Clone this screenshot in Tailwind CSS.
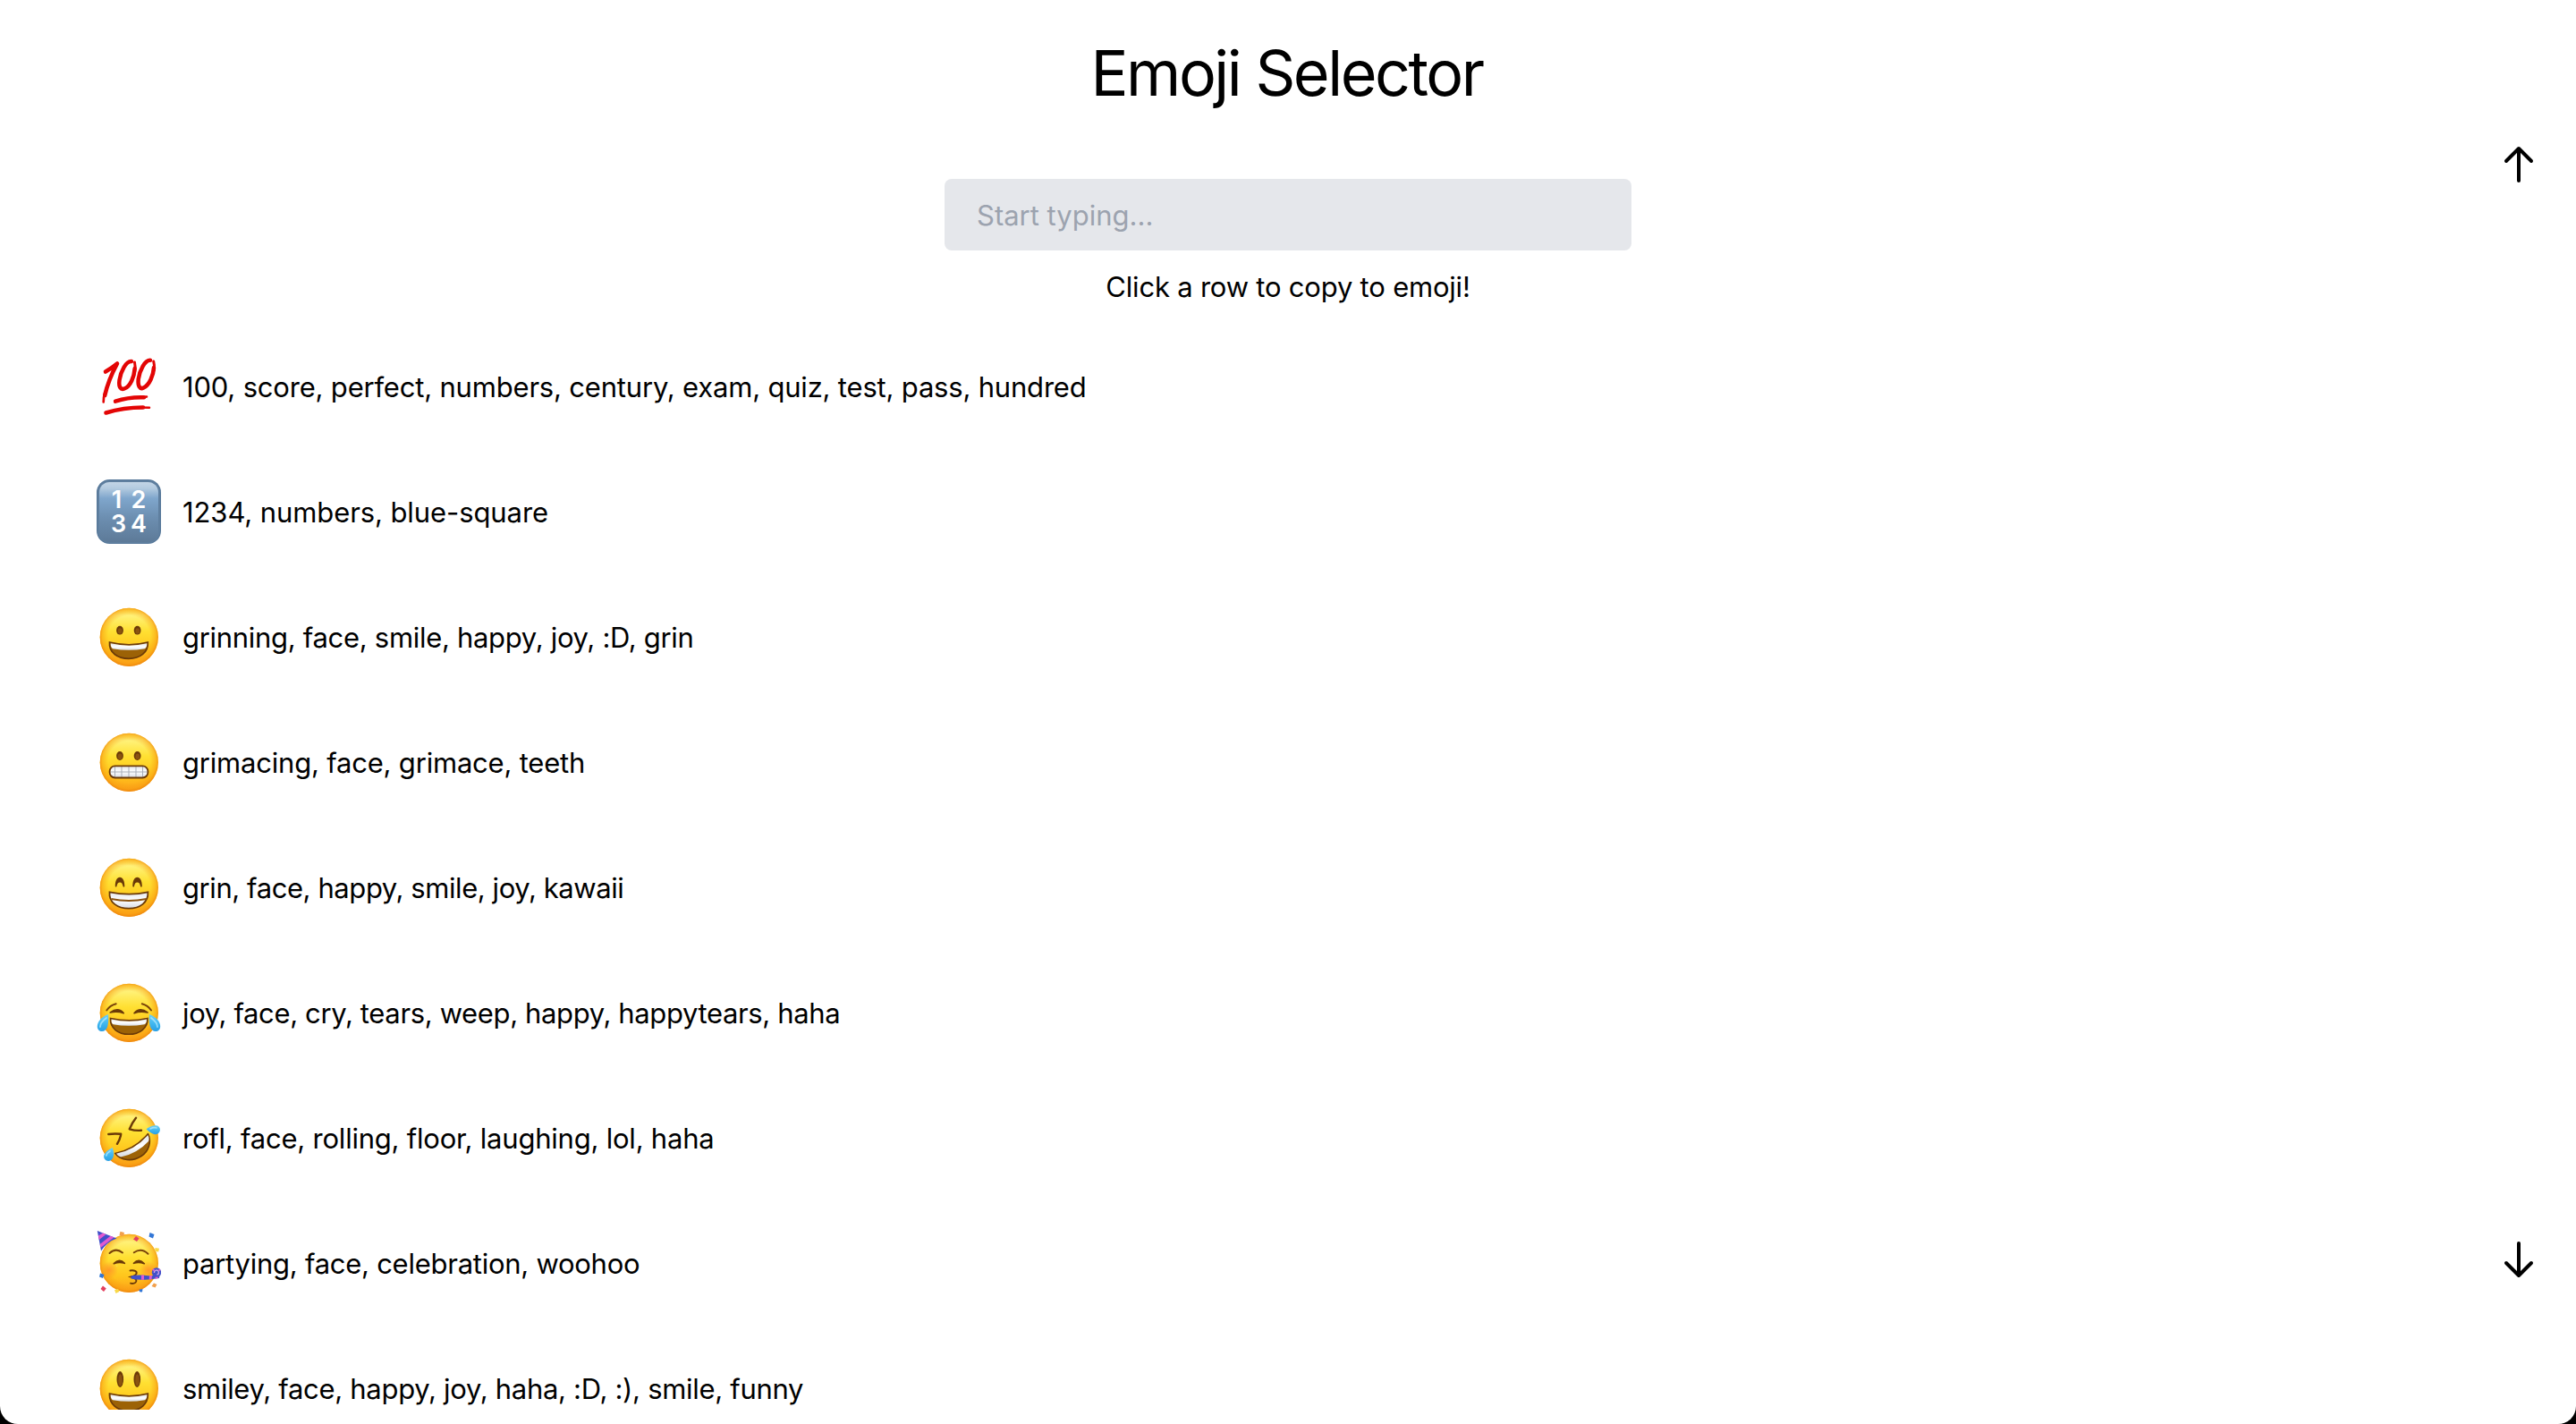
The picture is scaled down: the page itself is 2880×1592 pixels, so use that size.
<!DOCTYPE html>
<html lang="en">
<head>
<meta charset="utf-8">
<title>Emoji Selector</title>
<script src="https://cdn.jsdelivr.net/npm/@tailwindcss/browser@4"></script>
</head>
<body class="bg-black">
<!-- Shared gradients and shapes for the emoji artwork -->
<svg class="absolute size-0" aria-hidden="true">
  <defs>
    <linearGradient id="skin" x1="0" y1="0" x2="0" y2="1">
      <stop offset="0" stop-color="#ffe23f"/><stop offset=".12" stop-color="#fff27a"/><stop offset=".4" stop-color="#ffe032"/><stop offset=".72" stop-color="#ffc51c"/><stop offset="1" stop-color="#fda01a"/>
    </linearGradient>
    <radialGradient id="rim" cx=".5" cy=".49" r=".51">
      <stop offset=".7" stop-color="#f79a10" stop-opacity="0"/><stop offset=".9" stop-color="#f79a10" stop-opacity=".5"/><stop offset="1" stop-color="#ee860c" stop-opacity=".95"/>
    </radialGradient>
    <linearGradient id="teeth" x1="0" y1="0" x2="0" y2="1"><stop offset="0" stop-color="#e3e6ec"/><stop offset=".5" stop-color="#fff"/><stop offset="1" stop-color="#d5dae2"/></linearGradient>
    <linearGradient id="tear" x1="0" y1="0" x2="0" y2="1"><stop offset="0" stop-color="#6fd0f7"/><stop offset=".6" stop-color="#3cb4ef"/><stop offset="1" stop-color="#2a9fe4"/></linearGradient>
    <linearGradient id="tile" x1="0" y1="0" x2="0" y2="1"><stop offset="0" stop-color="#c3d5e6"/><stop offset=".1" stop-color="#b4cbe0"/><stop offset=".27" stop-color="#7fa6cc"/><stop offset=".6" stop-color="#6c8eb0"/><stop offset="1" stop-color="#5d7a98"/></linearGradient>
    <radialGradient id="blush"><stop offset="0" stop-color="#ff7a2a" stop-opacity=".6"/><stop offset="1" stop-color="#ff7a2a" stop-opacity="0"/></radialGradient>
    <g id="face"><circle cx="36.3" cy="36.3" r="32.6" fill="url(#skin)"/><circle cx="36.3" cy="36.3" r="32.6" fill="url(#rim)"/></g>
    <g id="eye"><ellipse rx="3.9" ry="4.9" fill="#6b3a08"/><ellipse cx=".2" cy=".8" rx="2.4" ry="3.2" fill="#8a5310"/></g>
  </defs>
</svg>

<div class="relative flex h-[1592px] w-[2880px] flex-col overflow-hidden rounded-b-[20px] bg-white font-['Inter',sans-serif] text-[31px] text-black">
  <header class="flex flex-col items-center pt-[42px]">
    <h1 class="h-20 pr-[3px] text-[70px] leading-[80px] tracking-[-2.5px]">Emoji Selector</h1>
    <input type="text" placeholder="Start typing..." class="mt-[78px] h-20 w-3xl rounded-lg bg-gray-200 px-9 pt-px tracking-normal placeholder:text-[#9ca3af]">
    <p class="mt-[17px] h-12 leading-[48px] tracking-[-0.21px]">Click a row to copy to emoji!</p>
  </header>

  <ul class="mt-[17px] h-[1214px] overflow-hidden px-[108px]">
    <li class="flex h-[140px] items-center gap-6">
      <svg class="size-[72px] shrink-0" viewBox="0 0 72 72" fill="none" stroke="#e30505" stroke-linecap="round" stroke-linejoin="round">
        <path stroke-width="4.6" d="M10 19.5Q17 15.500 23 10.500Q13 29 9.200 46"/><path stroke-width="2.600" d="M9.500 42Q7.600 48 7.700 53.500"/>
        <path stroke-width="4.500" d="M39 8C33 7.500 27 19 25.500 29C24.500 37 27 40 31 38.500C38 36 42 25 42.700 16"/><path stroke-width="3" d="M42.800 19Q43.500 13 42.500 9"/>
        <path stroke-width="4.500" d="M60 6.800C54 6.500 48 18 46.700 28C46 36 48.500 39.500 52.500 37.500C59.500 34 63.500 23 64 15"/><path stroke-width="3" d="M64.200 18Q65 12 63.700 8"/>
        <path stroke-width="4.400" d="M21 52.700Q36 47.700 53 48.300"/><path stroke-width="2.600" d="M50 48.500L56 47.500"/>
        <path stroke-width="4.600" d="M10.500 65.500Q30 59.500 52 59.500"/><path stroke-width="2.500" d="M48 59.500L59 59.800"/>
      </svg>
      <span class="pt-px leading-[48px] tracking-[-0.19px]">100, score, perfect, numbers, century, exam, quiz, test, pass, hundred</span>
    </li>
    <li class="flex h-[140px] items-center gap-6">
      <svg class="size-[72px] shrink-0" viewBox="0 0 72 72">
        <rect width="72" height="72" rx="14.500" fill="#557799"/>
        <rect x="1" y="1" width="70" height="70" rx="13.500" fill="#5f7f9f"/>
        <rect x="3" y="3" width="66" height="67" rx="11.500" fill="url(#tile)"/>
        <g fill="#fff" font-family="Inter, sans-serif" font-size="27" font-weight="600" text-anchor="middle"><text x="22.500" y="32">1</text><text x="47" y="32">2</text><text x="24.500" y="59">3</text><text x="47" y="59">4</text></g>
      </svg>
      <span class="pt-px leading-[48px] tracking-[-0.09px]">1234, numbers, blue-square</span>
    </li>
    <li class="flex h-[140px] items-center gap-6">
      <svg class="size-[72px] shrink-0" viewBox="0 0 72 72">
        <use href="#face"/><use href="#eye" x="26" y="28.700"/><use href="#eye" x="45.600" y="28.700"/>
        <path d="M14.500 42Q36.500 47.500 57.300 42C58 53.500 48.500 60.300 36 60.300S13.500 53.500 14.500 42Z" fill="#9c6206" stroke="#6b3a08" stroke-width="1.700"/>
        <path d="M15.700 43.300Q36.500 48 56.300 43.300Q56.500 47.500 54 49.200Q36 52.500 18 49.200Q15.500 47.500 15.700 43.300Z" fill="url(#teeth)"/>
      </svg>
      <span class="pt-px leading-[48px] tracking-[-0.3px]">grinning, face, smile, happy, joy, :D, grin</span>
    </li>
    <li class="flex h-[140px] items-center gap-6">
      <svg class="size-[72px] shrink-0" viewBox="0 0 72 72">
        <use href="#face"/><use href="#eye" x="26" y="29"/><use href="#eye" x="45.600" y="29"/>
        <rect x="14.600" y="40.300" width="42.800" height="13.200" rx="6" fill="url(#teeth)"/>
        <path d="M15 47H57M20.500 40.500V53.500M28 40.500V53.500M36 40.500V53.500M44 40.500V53.500M51.500 40.500V53.500" stroke="#a7adb8" stroke-width="1" fill="none"/>
        <rect x="14.600" y="40.300" width="42.800" height="13.200" rx="6" fill="none" stroke="#6b3a08" stroke-width="1.800"/>
      </svg>
      <span class="pt-px leading-[48px] tracking-[-0.2px]">grimacing, face, grimace, teeth</span>
    </li>
    <li class="flex h-[140px] items-center gap-6">
      <svg class="size-[72px] shrink-0" viewBox="0 0 72 72">
        <use href="#face"/>
        <path d="M20.800 34.500C20.800 28.500 22.800 24.700 26 24.700S31.300 28.500 31.300 34.500C31.300 36 29.800 36 29.500 34.800C29 32 28 30.500 26 30.500S23 32 22.500 34.800C22.200 36 20.800 36 20.800 34.500ZM40.300 34.500C40.300 28.500 42.300 24.700 45.500 24.700S50.800 28.500 50.800 34.500C50.800 36 49.300 36 49 34.800C48.500 32 47.500 30.500 45.500 30.500S42.500 32 42 34.800C41.700 36 40.300 36 40.300 34.500Z" fill="#6b3a08"/>
        <path d="M14.500 41.300Q36.500 46 57.400 41.300C58 53 48.500 59.600 36 59.600S13.500 53 14.500 41.300Z" fill="url(#teeth)" stroke="#6b3a08" stroke-width="1.800"/>
        <path d="M16.300 49Q36 53 55.700 49" fill="none" stroke="#8a5310" stroke-width="1.800"/>
      </svg>
      <span class="pt-px leading-[48px] tracking-[-0.42px]">grin, face, happy, smile, joy, kawaii</span>
    </li>
    <li class="flex h-[140px] items-center gap-6">
      <svg class="size-[72px] shrink-0" viewBox="0 0 72 72">
        <use href="#face"/>
        <path d="M11.300 33.500Q15 28 21.700 26.300M61 33.500Q57.300 28 50.800 26.300" fill="none" stroke="#7a4409" stroke-width="2" stroke-linecap="round"/>
        <path d="M15.300 36Q24 29.500 30.300 36.700Q23 34.300 15.300 36ZM57 36Q48.300 29.500 42 36.700Q49 34.300 57 36Z" fill="#6b3a08" stroke="#6b3a08" stroke-width="1.600" stroke-linejoin="round"/>
        <path d="M15.500 42.500Q36.500 47 57 42.500C57.500 53.500 48 60.300 36 60.300S15 53.500 15.500 42.500Z" fill="#9c6206" stroke="#6b3a08" stroke-width="1.600"/>
        <path d="M16.500 43.500Q36.500 48 56 43.500Q56 48 53.500 49.300Q36 52.300 18.500 49.300Q16.300 48 16.500 43.500Z" fill="url(#teeth)"/>
        <path d="M13 38C5 41 .8 46.500 .8 51.500C.8 55 3 57 6 57C12 57 14 49 13 38Z" fill="url(#tear)"/><path d="M59 38C67 41 71.200 46.500 71.200 51.500C71.200 55 69 57 66 57C60 57 58 49 59 38Z" fill="url(#tear)"/>
        <path d="M11 42C7 45 4 48 4 52M61 42C65 45 68 48 68 52" fill="none" stroke="#b9ecff" stroke-width="1.800" stroke-linecap="round" opacity=".7"/>
      </svg>
      <span class="pt-px leading-[48px] tracking-[-0.36px]">joy, face, cry, tears, weep, happy, happytears, haha</span>
    </li>
    <li class="flex h-[140px] items-center gap-6">
      <svg class="size-[72px] shrink-0" viewBox="0 0 72 72">
        <use href="#face"/>
        <path d="M13.300 32Q20 31 27.200 31.800Q26.500 37.500 23 42.800M44 13.800Q39.500 19.500 36.800 26.300Q43 28.300 50 27.800" fill="none" stroke="#6b3a08" stroke-width="2.400" stroke-linecap="round" stroke-linejoin="round"/>
        <path d="M20.800 53.500Q43 49 57.500 31.500C61.500 40 59 50.500 50 56.500C40 63 27 61.500 20.800 53.500Z" fill="#9c6206" stroke="#6b3a08" stroke-width="1.600" stroke-linejoin="round"/>
        <path d="M22 53.800Q43.500 49.500 57.300 33Q59.300 36.500 58 40Q45 54 27 57.500Q23.500 56.500 22 53.800Z" fill="url(#teeth)"/>
        <path d="M55.500 26.300C60 23 63.500 21.800 67 22.300C70 23 71.500 25.500 70.800 28.200C69.800 31.500 66.500 32.800 63.500 31.800C60.500 30.800 58 28.500 55.500 26.300Z" fill="url(#tear)"/>
        <path d="M17.800 47C19.500 52 19.700 56 18 59C16.200 62 13 62.800 10.500 61.200C8 59.500 7.300 56.500 9.200 53.700C11 51 14 49 17.800 47Z" fill="url(#tear)"/>
        <path d="M60 26Q64 24 67 25M15 51Q11.500 53 10.800 56" fill="none" stroke="#b9ecff" stroke-width="1.600" stroke-linecap="round" opacity=".7"/>
      </svg>
      <span class="pt-px leading-[48px] tracking-[-0.22px]">rofl, face, rolling, floor, laughing, lol, haha</span>
    </li>
    <li class="flex h-[140px] items-center gap-6">
      <svg class="size-[72px] shrink-0" viewBox="0 0 72 72">
        <use href="#face"/>
        <circle cx="14" cy="44" r="10" fill="url(#blush)"/><circle cx="58" cy="44" r="10" fill="url(#blush)"/>
        <path d="M.8 0L22.500 8.500Q12 12 5 22.500Z" fill="#4150c9"/>
        <path d="M1.800 5.500L7 2.500L10.500 4L2.800 10ZM3.700 15L15.500 5.800L19.500 7.300L4.500 19Z" fill="#e259cf"/>
        <path d="M14.500 25Q21.500 18.500 29 24.500M41.800 24.300Q50 18.500 57.500 25.700" fill="none" stroke="#7a4409" stroke-width="2" stroke-linecap="round"/>
        <path d="M19.300 36.700Q25.500 30 31.300 36.300Q25.500 34.500 19.300 36.700ZM41.500 36.300Q47.300 30 53.300 36.700Q47.300 34.500 41.500 36.300Z" fill="#6b3a08" stroke="#6b3a08" stroke-width="1.700" stroke-linejoin="round"/>
        <path d="M37.500 44.500C42 43.500 45.500 45.500 44.500 48C43.500 50 40.500 51 38.500 51.500C42 52.500 45 54 44.300 56.500C43.500 58.700 40.500 59.300 38 58.700" fill="none" stroke="#6b3a08" stroke-width="1.900" stroke-linecap="round"/>
        <path d="M38.500 50.500Q46 48.500 60 50.500L70.500 49L70 53L58 54.500Q46 55.500 38.500 53.500Z" fill="#4150c9"/>
        <path d="M50 49.600H53V54.800H50ZM59 50.300L62 50L61.500 54.200L58.700 54.500ZM66 49.700L69 49.200L68.500 53.200L65.500 53.600Z" fill="#e259cf"/>
        <circle cx="67" cy="46.500" r="5.200" fill="#4150c9"/><path d="M64.500 47A2.500 2.500 0 1 1 67.500 49" fill="none" stroke="#c9a0e8" stroke-width="1.300"/><path d="M71 43.500L69.500 44.500M63 43L64.500 44.500" stroke="#e259cf" stroke-width="1.800"/>
        <path d="M26.500 .8L31 2L30 6L25.500 4.800ZM64 58.500L67.500 60L65.500 63.500L61.500 62Z" fill="#f2a04c"/>
        <path d="M44 6L47.500 8.500L45 12L41 9.500ZM7 61.500L10.800 64.500L8 68L4.500 65Z" fill="#e3405f"/>
        <path d="M59.500 2L64.500 4L63 8.500L58.500 6.500ZM4 47.500L8.500 49L7 53L3 51.500ZM47.500 65.800L51.500 65L51 68.500L48 68.300Z" fill="#3377d6"/>
        <path d="M20 66L24 65L25.500 68L21.500 70ZM21 38.500L24 38.800L22.500 40.500ZM65.500 19L70 19.700L69.200 23.500L65 22.700Z" fill="#f9d949"/>
      </svg>
      <span class="pt-px leading-[48px] tracking-[-0.26px]">partying, face, celebration, woohoo</span>
    </li>
    <li class="flex h-[140px] items-center gap-6">
      <svg class="size-[72px] shrink-0" viewBox="0 0 72 72">
        <use href="#face"/>
        <ellipse cx="26.300" cy="26" rx="3.800" ry="9" fill="#6b3a08"/><ellipse cx="45.300" cy="26" rx="3.800" ry="9" fill="#6b3a08"/><ellipse cx="26.500" cy="27" rx="2.300" ry="6.800" fill="#8a5310"/><ellipse cx="45.500" cy="27" rx="2.300" ry="6.800" fill="#8a5310"/>
        <path d="M14.500 42Q36.500 47.500 57.300 42C58 53.500 48.500 61.500 36 61.500S13.500 53.500 14.500 42Z" fill="#9c6206" stroke="#6b3a08" stroke-width="1.700"/>
        <path d="M15.700 43.300Q36.500 48 56.300 43.300Q56.500 47.500 54 49.200Q36 52.500 18 49.200Q15.500 47.500 15.700 43.300Z" fill="url(#teeth)"/>
      </svg>
      <span class="pt-px leading-[48px] tracking-[-0.3px]">smiley, face, happy, joy, haha, :D, :), smile, funny</span>
    </li>
  </ul>

  <!-- Floating scroll buttons -->
  <button aria-label="Scroll up" class="absolute top-40 right-10"><svg class="size-12" viewBox="0 0 24 24" fill="none" stroke="currentColor" stroke-width="2" stroke-linecap="round" stroke-linejoin="round"><path d="M5 10l7-7m0 0l7 7m-7-7v18"/></svg></button>
  <button aria-label="Scroll down" class="absolute right-10 bottom-40"><svg class="size-12" viewBox="0 0 24 24" fill="none" stroke="currentColor" stroke-width="2" stroke-linecap="round" stroke-linejoin="round"><path d="M19 14l-7 7m0 0l-7-7m7 7V3"/></svg></button>
</div>
</body>
</html>
